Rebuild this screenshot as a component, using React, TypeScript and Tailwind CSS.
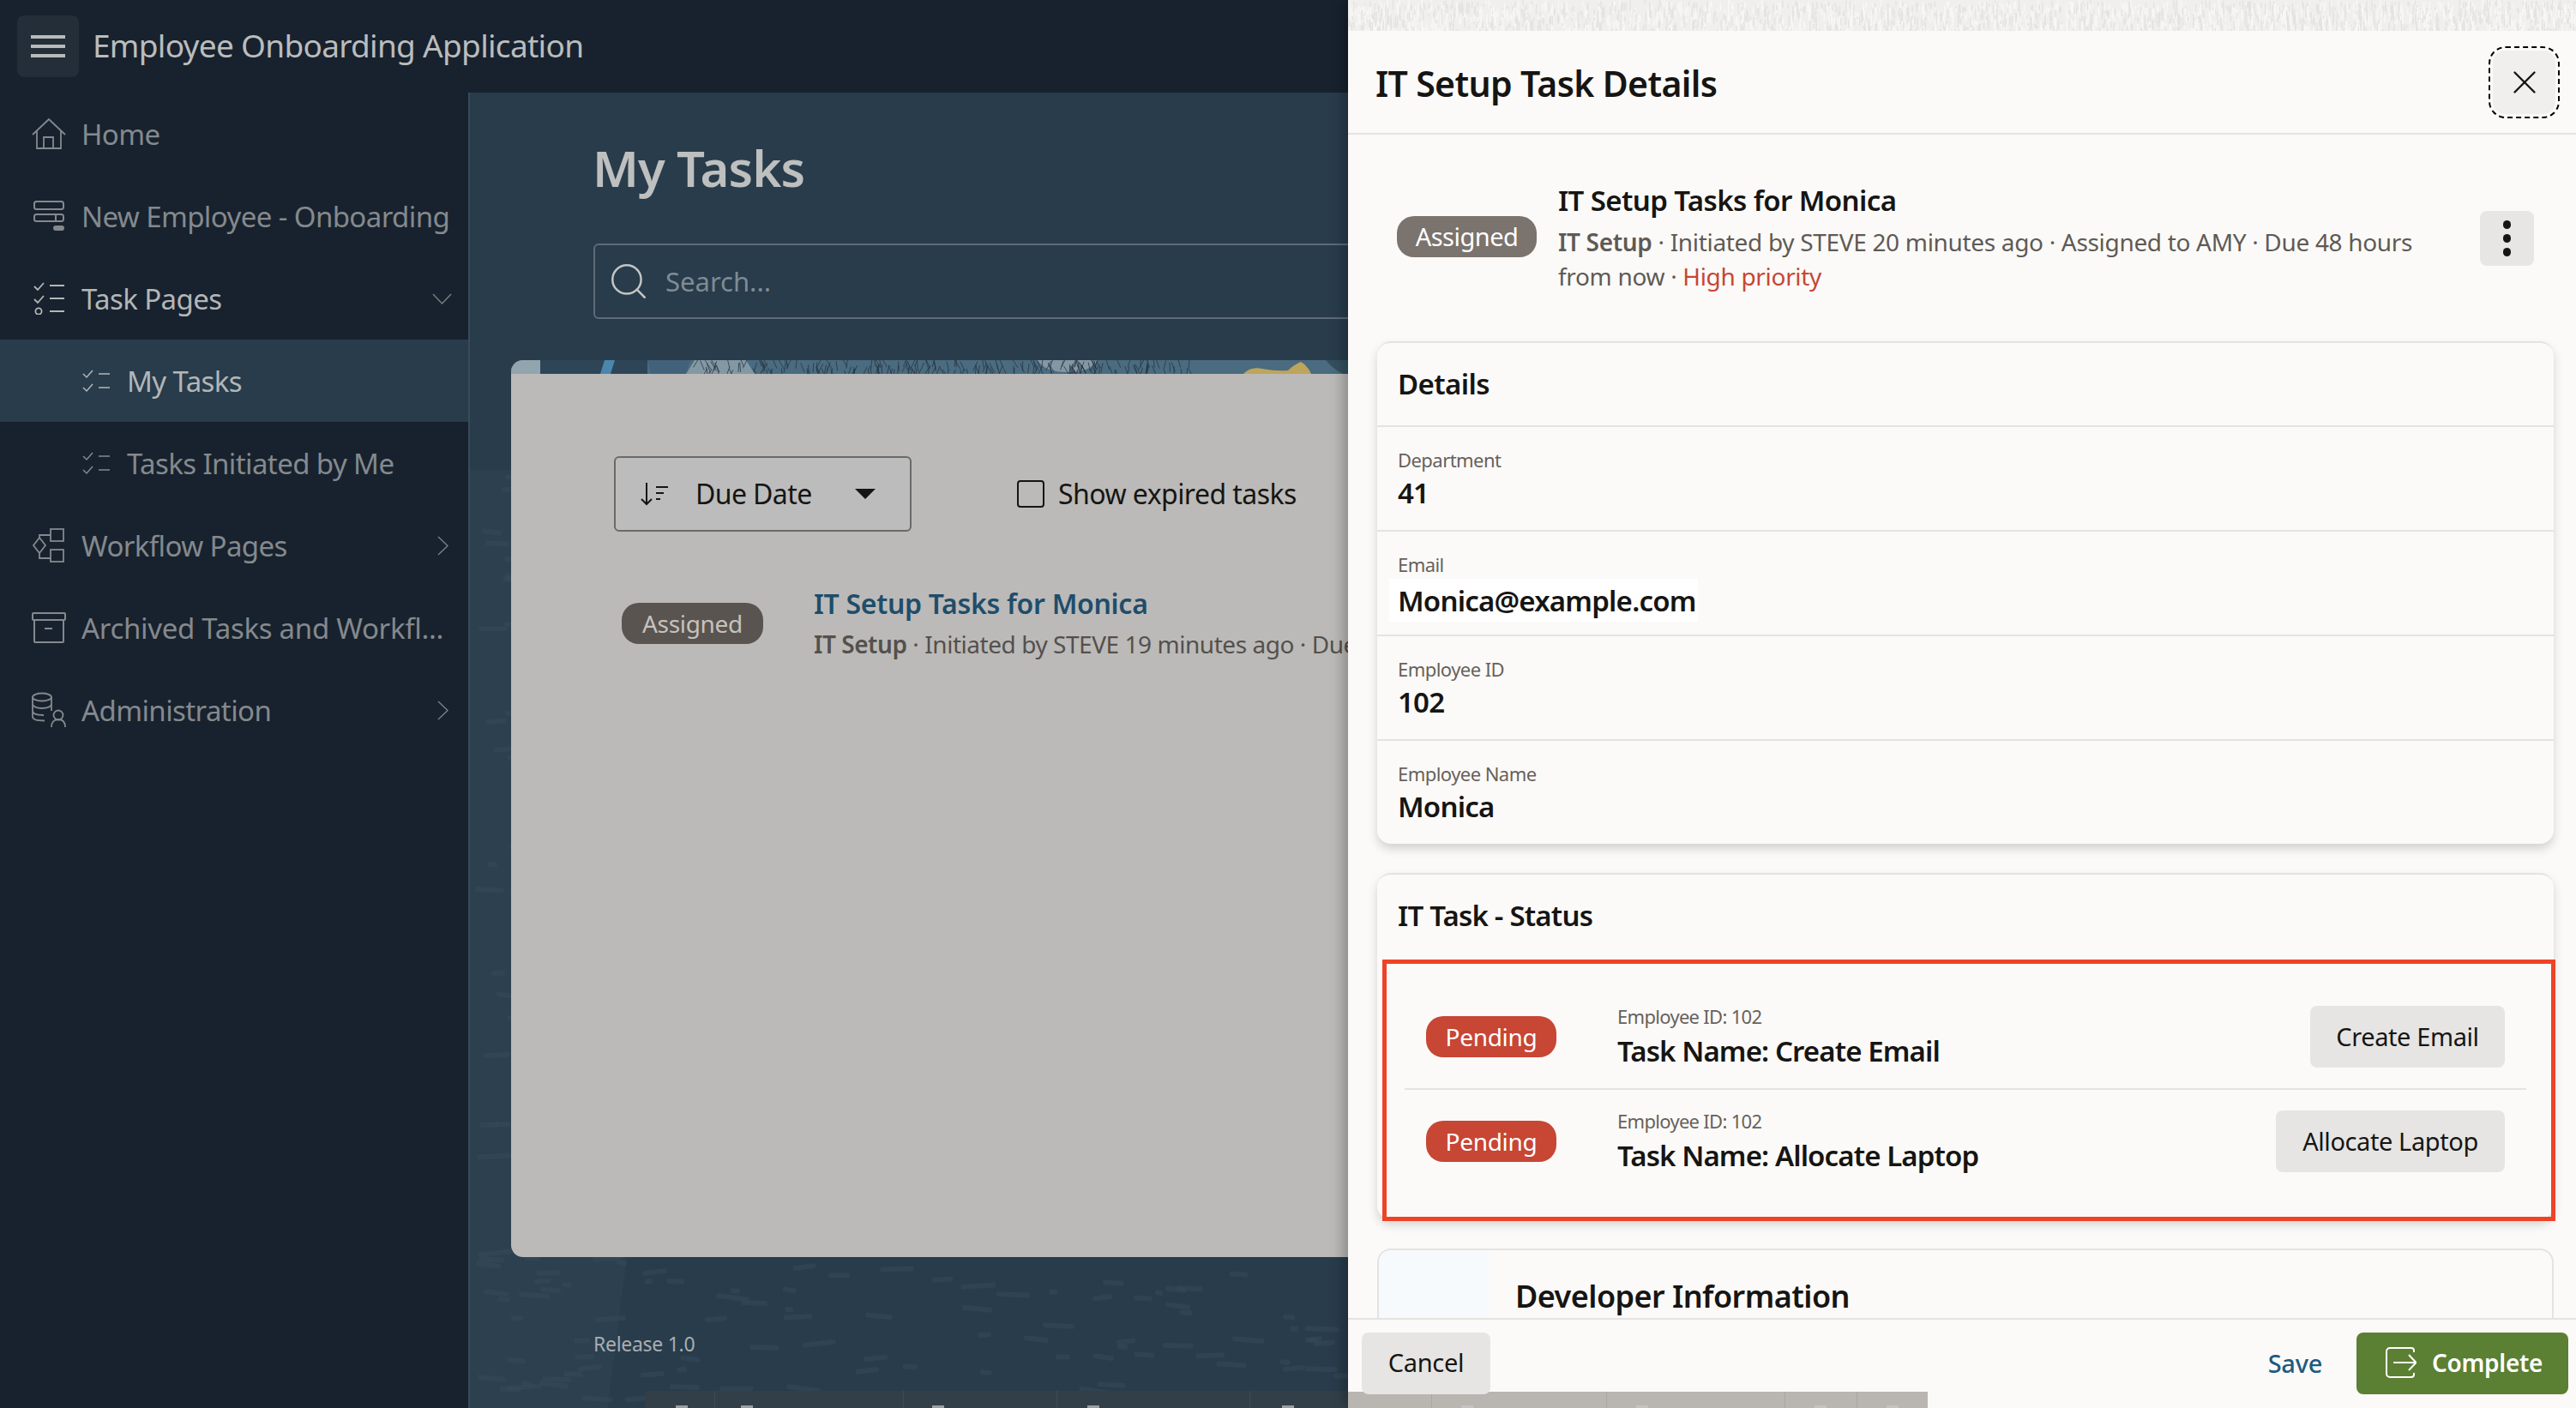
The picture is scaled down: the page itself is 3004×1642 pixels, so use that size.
import React from "react";
import { Search, X } from "lucide-react";

const FONT = "font-['Noto_Sans','Open_Sans',sans-serif]";

function seeded(n: number, w: number, h: number, seed: number) {
  const out: { x: number; y: number; l: number; r: number }[] = [];
  let s = seed;
  const rnd = () => {
    s = (s * 9301 + 49297) % 233280;
    return s / 233280;
  };
  for (let i = 0; i < n; i++) {
    out.push({ x: rnd() * w, y: rnd() * h, l: 8 + rnd() * 34, r: -8 + rnd() * 16 });
  }
  return out;
}

function Marks() {
  const marks = seeded(620, 1100, 1100, 17);
  return (
    <svg className="absolute left-0 top-[440px] w-[1100px] h-[1100px] pointer-events-none" viewBox="0 0 1100 1100">
      <polygon points="0,0 300,0 160,1100 0,1100" fill="#2e4251" opacity="0.7" />
      {marks.map((m, i) => (
        <rect key={i} x={m.x} y={m.y} width={m.l} height={6} rx={2} fill="#3a4b5a" opacity={0.45} transform={`rotate(${m.r} ${m.x} ${m.y})`} />
      ))}
    </svg>
  );
}

function Stripe() {
  const marks = seeded(2600, 1432, 36, 5);
  return (
    <svg className="block w-[1432px] h-[36px] shrink-0" viewBox="0 0 1432 36">
      <rect width="1432" height="36" fill="#f0efed" />
      {marks.map((m, i) => (
        <rect key={i} x={m.x} y={m.y} width={1.5} height={m.l / 3} fill={i % 2 ? "#e4e3e1" : "#f8f7f5"} />
      ))}
    </svg>
  );
}

function Hatch() {
  const marks = seeded(230, 575, 16, 41);
  return (
    <g>
      {marks.map((m, i) => (
        <path key={i} d={`M${219 + m.x} ${m.y - 4}l${(m.r * 0.9).toFixed(1)} 11`} stroke="#26333d" strokeWidth="1" opacity="0.75" fill="none" />
      ))}
    </g>
  );
}

function TaskIcon3() {
  return (
    <svg width="36" height="38" viewBox="0 0 36 38" fill="none" stroke="currentColor" strokeWidth="1.8">
      <path d="M1 5l4 4 7-8M19 4h17M1 20l4 4 7-8M19 19h17M19 34h17" />
      <circle cx="6" cy="34" r="3.6" />
    </svg>
  );
}
function TaskIcon2() {
  return (
    <svg width="32" height="28" viewBox="0 0 32 28" fill="none" stroke="currentColor" strokeWidth="1.5">
      <path d="M1 6l4 4 7-8M19 6h13M1 22l4 4 7-8M19 22h13" />
    </svg>
  );
}

const ic = "shrink-0";
function Home() {
  return <svg className={ic} width="40" height="36" viewBox="0 0 40 36" fill="none" stroke="currentColor" strokeWidth="1.8"><path d="M1 19L20 1l19 18M6 15v20h28V15M14 35V22h11v13" /></svg>;
}
function Form() {
  return <svg className={ic} width="38" height="36" viewBox="0 0 38 36" fill="none" stroke="currentColor" strokeWidth="2"><rect x="2" y="1" width="34" height="9" rx="2.5" /><rect x="2" y="16" width="34" height="8" rx="2.5" /><path d="M27 16v8" /><rect x="25" y="30" width="11" height="4" rx="2" fill="currentColor" /></svg>;
}
function Flow() {
  return <svg className={ic} width="40" height="42" viewBox="0 0 40 42" fill="none" stroke="currentColor" strokeWidth="1.8"><rect x="22" y="2" width="15" height="14" /><rect x="22" y="26" width="15" height="14" /><path d="M9 12L2 21l7 9 7-9zM9 12V9h13M9 30v6h13" /></svg>;
}
function Archive() {
  return <svg className={ic} width="40" height="36" viewBox="0 0 40 36" fill="none" stroke="currentColor" strokeWidth="2"><rect x="1" y="1" width="38" height="8" rx="1" /><rect x="3" y="9" width="34" height="26" rx="1" /><path d="M15 19h9" /></svg>;
}
function Admin() {
  return <svg className={ic} width="42" height="42" viewBox="0 0 42 42" fill="none" stroke="currentColor" strokeWidth="1.8"><ellipse cx="13" cy="6" rx="11" ry="4.5" /><path d="M2 6v23c0 3 5 4.5 14 4.5M24 6v16M2 14c0 3 5 5 11 5s11-2 11-5M2 22c0 3 5 5 13 5" /><circle cx="32" cy="27" r="5.5" /><path d="M24 41c0-6 3-9 8-9s8 3 8 9" /></svg>;
}

function NavRow({ icon, label, active, dim, sub, chev, wide }: { icon: React.ReactNode; label: string; active?: boolean; dim?: boolean; sub?: boolean; chev?: "down" | "right"; wide?: boolean }) {
  return (
    <div className={`h-[96px] flex items-center ${sub ? "pl-[95px]" : "pl-[37px]"} pr-[18px] ${active ? "bg-[#283c4b]" : ""} ${dim ? "text-[#85898d]" : "text-[#b4b6b7]"}`}>
      <span className={`flex items-center justify-center ${sub ? "w-[33px] mr-[20px]" : "w-[40px] mr-[18px]"}`}>{icon}</span>
      <span className={`flex-1 text-[33px] whitespace-nowrap leading-none mt-[1px] ${wide ? "tracking-[-0.3px]" : "tracking-[-0.6px]"}`}>{label}</span>
      {chev === "down" ? (
        <svg width="23" height="13" viewBox="0 0 23 13" fill="none" stroke="#7b8084" strokeWidth="1.4" className="mr-[1px]"><path d="M1 1l10.500 11L22 1" /></svg>
      ) : null}
      {chev === "right" ? (
        <svg width="13" height="23" viewBox="0 0 13 23" fill="none" stroke="#7b8084" strokeWidth="1.4" className="mr-[5px]"><path d="M1 1l11 10.500L1 22" /></svg>
      ) : null}
    </div>
  );
}

function Field({ label, value, highlight }: { label: string; value: string; highlight?: boolean }) {
  return (
    <div className="h-[122px] border-t-2 border-[#e5e3e0] pl-[24px] pt-[24px]">
      <div className="text-[22px] leading-[28px] text-[#67615c] tracking-[-0.55px]">{label}</div>
      <div className={`text-[33px] font-semibold text-[#161513] tracking-[-0.8px] -ml-[10px] pl-[10px] w-fit pr-[2px] ${highlight ? "bg-white mt-[3px] h-[50px] leading-[52px]" : "leading-[50px]"}`}>{value}</div>
    </div>
  );
}

function TaskRow({ name, action, btnW }: { name: string; action: string; btnW: string }) {
  return (
    <div className="h-[120px] flex items-center pl-[25px] pr-[25px]">
      <span className="w-[152px] h-[48px] rounded-[20px] bg-[#c74634] text-white text-[28px] flex items-center justify-center tracking-[-0.3px]">Pending</span>
      <div className="ml-[71px] flex-1">
        <div className="text-[22px] leading-[28px] text-[#67615c] tracking-[-0.7px]">Employee ID: 102</div>
        <div className="text-[33px] leading-[44px] font-semibold text-[#161513] tracking-[-0.9px] mt-[5px]">{name}</div>
      </div>
      <button className={`${btnW} h-[72px] rounded-[8px] bg-[#e6e5e3] text-[#161513] text-[29px] tracking-[-0.4px]`}>{action}</button>
    </div>
  );
}

function Tip() {
  return <i className="block w-[14px] h-[3px] bg-[#c9c9c7] opacity-70" />;
}

export default function App() {
  return (
    <div className={`relative w-[3004px] h-[1642px] overflow-hidden bg-[#283c4b] ${FONT}`}>
      <header className="h-[108px] bg-[#17222e] flex items-center pl-[20px]">
        <div className="w-[72px] h-[72px] rounded-[8px] bg-[#242e39] flex items-center justify-center">
          <svg width="40" height="26" viewBox="0 0 40 26" fill="#b8babb"><rect width="40" height="4" y="0" /><rect width="40" height="4" y="11" /><rect width="40" height="4" y="22" /></svg>
        </div>
        <span className="ml-[16px] -mt-[2px] text-[37px] text-[#bbbcbd] tracking-[-0.7px]">Employee Onboarding Application</span>
      </header>
      <div className="flex h-[1534px]">
        <nav className="w-[548px] shrink-0 bg-[#17222e] border-r-2 border-[#3a4a58]">
          <NavRow icon={<Home />} label="Home" dim />
          <NavRow icon={<Form />} label="New Employee - Onboarding" dim />
          <NavRow icon={<TaskIcon3 />} label="Task Pages" chev="down" />
          <NavRow icon={<TaskIcon2 />} label="My Tasks" active sub />
          <NavRow icon={<TaskIcon2 />} label="Tasks Initiated by Me" dim sub />
          <NavRow icon={<Flow />} label="Workflow Pages" dim chev="right" />
          <NavRow icon={<Archive />} label="Archived Tasks and Workfl..." dim wide />
          <NavRow icon={<Admin />} label="Administration" dim chev="right" />
        </nav>
        <main className="relative flex-1 overflow-hidden">
          <Marks />
          <div className="relative pl-[144px] pt-[56px]">
            <h1 className="text-[58px] leading-[64px] font-semibold text-[#bebfbf] tracking-[-0.9px] -ml-[1px]">My Tasks</h1>
            <div className="mt-[56px] h-[88px] border-2 border-[#5d6c78] rounded-[6px] flex items-center pl-[14px]">
              <Search size={50} strokeWidth={1.2} className="text-[#c2c4c5]" />
              <span className="ml-[18px] text-[31px] text-[#7f8b95]">Search...</span>
            </div>
          </div>
          <section className="relative ml-[48px] mt-[48px] w-[1100px] h-[1046px] rounded-[14px] overflow-hidden bg-[#bbbab8]">
            <svg className="block w-full h-[16px]" viewBox="0 0 1100 16" preserveAspectRatio="none">
              <rect width="1100" height="16" fill="#4a6b80" />
              <rect x="0" width="34" height="16" fill="#92a4ad" />
              <rect x="34" width="125" height="16" fill="#2d4557" />
              <path d="M104 16l5-16h12l-5 16z" fill="#4b86ab" />
              <path d="M159 0h50l-5 16h-41z" fill="#41627a" />
              <path d="M214 0h60l10 16H204z" fill="#8298a4" />
              <path d="M614 0h70q-8 14-35 14T614 0z" fill="#8298a4" />
              <Hatch />
              <path d="M854 16q8-9 22-6 16 3 30 2 6-6 15-10 8 4 12 14z" fill="#bda55c" />
              <path d="M950 0h26v16h-6q-12-6-20-16z" fill="#33505f" />
            </svg>
            <div className="flex items-center mt-[96px] ml-[120px]">
              <div className="w-[347px] h-[88px] border-2 border-[#6a6a6a] rounded-[6px] bg-[#bcbcbc] flex items-center pl-[28px]">
                <svg width="36" height="30" viewBox="0 0 36 30" fill="none" stroke="#161513" strokeWidth="2"><path d="M8 2v25M2 21l6 6 6-6M19 7h14M19 14h9M19 21h5" /></svg>
                <span className="ml-[29px] text-[32px] text-[#161513] tracking-[-0.6px]">Due Date</span>
                <span className="ml-[50px] w-0 h-0 border-x-[12px] border-x-transparent border-t-[12px] border-t-[#161513]" />
              </div>
              <span className="ml-[123px] w-[32px] h-[32px] border-2 border-[#161513] rounded-[4px]" />
              <span className="ml-[16px] text-[32px] text-[#161513] tracking-[-0.55px] whitespace-nowrap">Show expired tasks</span>
            </div>
            <div className="flex items-center mt-[62px] ml-[129px]">
              <span className="w-[165px] h-[48px] rounded-[20px] bg-[#5a5450] text-[#c5c2bf] text-[28px] flex items-center justify-center tracking-[-0.3px]">Assigned</span>
              <div className="ml-[59px] whitespace-nowrap">
                <div className="text-[32px] leading-[44px] font-semibold text-[#1f4d6a] tracking-[-0.3px]">IT Setup Tasks for Monica</div>
                <div className="text-[28px] leading-[40px] text-[#54504c] tracking-[-0.45px] mt-[5px]"><b className="font-semibold">IT Setup</b> · Initiated by STEVE 19 minutes ago · Due</div>
              </div>
            </div>
          </section>
          <div className="relative ml-[144px] mt-[86px] text-[23px] leading-[30px] text-[#a9aeb2] tracking-[-0.3px]">Release 1.0</div>
          <div className="absolute left-[205px] top-[1514px] w-[1500px] h-[20px] bg-[#333f48] flex items-end">
            <span className="w-[81px] h-full border-r border-[#3f4a52] pl-[35px] flex items-end"><Tip /></span>
            <span className="w-[220px] h-full border-r border-[#3f4a52] pl-[30px] flex items-end"><Tip /></span>
            <span className="w-[179px] h-full border-r border-[#3f4a52] pl-[33px] flex items-end"><Tip /></span>
            <span className="w-[225px] h-full border-r border-[#3f4a52] pl-[35px] flex items-end"><Tip /></span>
            <span className="w-[212px] h-full pl-[37px] flex items-end"><Tip /></span>
          </div>
        </main>
      </div>

      <aside className="absolute right-0 top-0 w-[1432px] h-[1642px] bg-[#fbfaf8] flex flex-col shadow-[-6px_0_14px_rgba(0,0,0,0.25)]">
        <Stripe />
        <div className="h-[121px] shrink-0 border-b-2 border-[#e5e3e0] flex items-center pl-[32px] pr-[19px]">
          <h2 className="flex-1 pt-[4px] text-[41px] font-semibold text-[#161513] tracking-[-0.65px] leading-none">IT Setup Task Details</h2>
          <button className="w-[83px] h-[84px] rounded-[20px] border-2 border-dashed border-black p-[3px]">
            <span className="flex w-full h-full rounded-[14px] bg-[#f1efed] items-center justify-center text-[#161513]"><X size={46} strokeWidth={1.25} /></span>
          </button>
        </div>
        <div className="flex-1 min-h-0 overflow-hidden">
          <div className="h-[241px] relative pl-[57px] pr-[49px] flex items-center">
            <span className="w-[163px] h-[48px] mt-[-3px] rounded-[20px] bg-[#7a736e] text-white text-[29px] flex items-center justify-center tracking-[-0.5px] shrink-0">Assigned</span>
            <div className="ml-[25px] flex-1 mt-[-1px]">
              <div className="text-[33px] leading-[44px] font-semibold text-[#161513] tracking-[-0.6px]">IT Setup Tasks for Monica</div>
              <div className="text-[28px] leading-[40px] text-[#5f5a55] tracking-[-0.32px] mt-[6px] max-w-[1030px]"><b className="font-semibold">IT Setup</b> · Initiated by STEVE 20 minutes ago · Assigned to AMY · Due 48 hours from now · <span className="text-[#c74634]">High priority</span></div>
            </div>
            <span className="w-[63px] h-[64px] rounded-[8px] bg-[#e8e6e4] flex flex-col items-center justify-center gap-[6px] shrink-0">
              <i className="w-[9px] h-[10px] rounded-full bg-[#161513]" /><i className="w-[9px] h-[10px] rounded-full bg-[#161513]" /><i className="w-[9px] h-[10px] rounded-full bg-[#161513]" />
            </span>
          </div>
          <div className="ml-[34px] w-[1372px] rounded-[16px] border-t-2 border-[#e5e3e0] bg-[#fbfaf8] shadow-[0_6px_12px_rgba(0,0,0,0.16)]">
            <div className="h-[96px] pl-[24px] flex items-center text-[33px] font-semibold text-[#161513] tracking-[-0.6px]">Details</div>
            <Field label="Department" value="41" />
            <Field label="Email" value="Monica@example.com" highlight />
            <Field label="Employee ID" value="102" />
            <Field label="Employee Name" value="Monica" />
          </div>
          <div className="relative ml-[34px] mt-[34px] w-[1372px] h-[404px] rounded-[16px] border-t-2 border-[#e5e3e0] shadow-[0_6px_12px_rgba(0,0,0,0.16)]">
            <div className="h-[96px] pl-[24px] flex items-center text-[33px] font-semibold text-[#161513] tracking-[-0.8px]">IT Task - Status</div>
            <div className="absolute left-[6px] top-[99px] w-[1368px] h-[305px] border-[5px] border-[#ee4327] pt-[25px] pl-[21px] pr-[29px]">
              <TaskRow name="Task Name: Create Email" action="Create Email" btnW="w-[227px]" />
              <div className="border-t-2 border-[#e5e3e0]" />
              <TaskRow name="Task Name: Allocate Laptop" action="Allocate Laptop" btnW="w-[267px]" />
            </div>
          </div>
          <div className="ml-[34px] mt-[34px] w-[1372px] h-[90px] rounded-t-[16px] border-x-2 border-t-2 border-[#e5e3e0] flex overflow-hidden">
            <span className="w-[129px] bg-[#f6fafd]" />
            <span className="ml-[30px] pt-[29px] text-[36px] font-semibold text-[#161513] tracking-[-0.55px] leading-[50px]">Developer Information</span>
          </div>
        </div>
        <footer className="h-[105px] shrink-0 border-t-2 border-[#e5e3e0] bg-[#fbfaf8] flex items-start pt-[15px] pl-[16px] pr-[9px] relative">
          <button className="relative z-10 w-[150px] h-[72px] rounded-[8px] bg-[#e6e5e3] text-[#161513] text-[29px] tracking-[-0.3px] pb-[2px]">Cancel</button>
          <span className="ml-auto mt-[14px] text-[29px] font-medium text-[#1f5a80] tracking-[-0.3px]">Save</span>
          <button className="ml-[40px] w-[247px] h-[72px] rounded-[8px] bg-[#5b7f33] text-white text-[28px] font-semibold tracking-[-0.3px] flex items-center pl-[34px] gap-[18px] pb-[2px]">
            <svg width="36" height="36" viewBox="0 0 36 36" fill="none" stroke="#fff" strokeWidth="2"><path d="M33 6V4a3 3 0 0 0-3-3H5a4 4 0 0 0-4 4v26a4 4 0 0 0 4 4h25a3 3 0 0 0 3-3v-2" /><path d="M9 18h26M27 9l8.500 9L27 27" /></svg>
            Complete
          </button>
          <div className="absolute left-0 top-[84px] w-[676px] h-[19px] bg-[#b9b6b2] flex items-end">
            <span className="w-[98px] h-full border-r border-[#aaa7a3]" />
            <span className="w-[204px] h-full border-r border-[#aaa7a3] pl-[34px] flex items-end"><Tip /></span>
            <span className="w-[208px] h-full border-r border-[#aaa7a3] pl-[34px] flex items-end"><Tip /></span>
            <span className="w-[84px] h-full border-r border-[#aaa7a3] pl-[34px] flex items-end"><Tip /></span>
            <span className="w-[82px] h-full pl-[34px] flex items-end"><Tip /></span>
          </div>
        </footer>
      </aside>
    </div>
  );
}
